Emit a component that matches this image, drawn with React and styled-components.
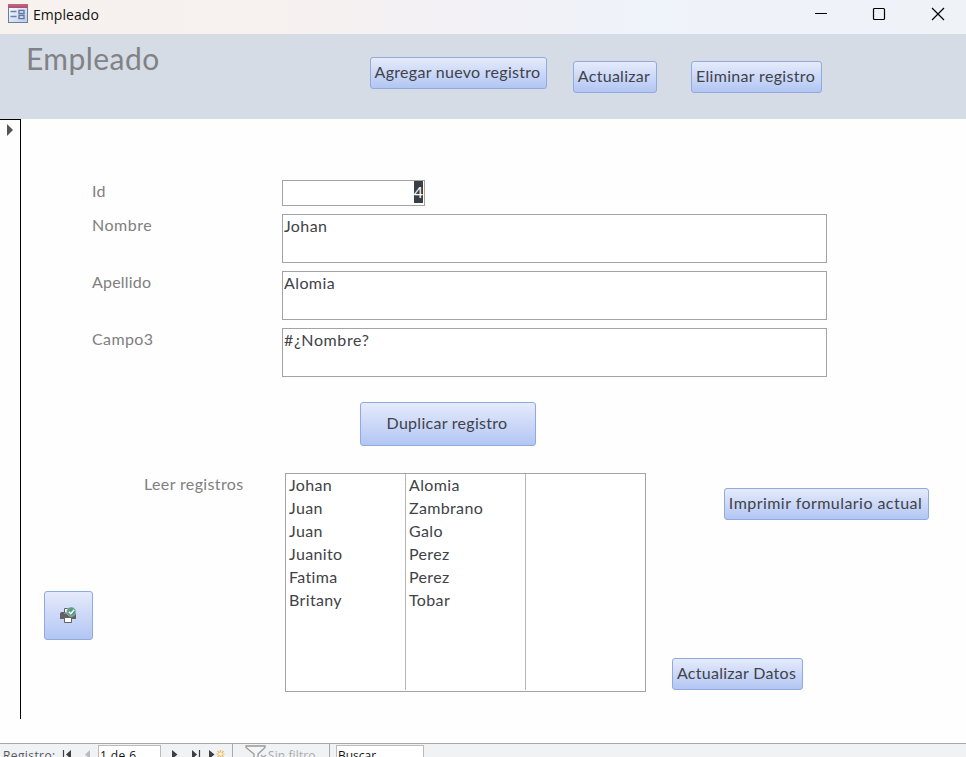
import React from "react";
import styled, { createGlobalStyle } from "styled-components";

const Global = createGlobalStyle`
  * { box-sizing: border-box; }
  body { margin: 0; background: #fff; overflow: hidden; }
`;

const Window = styled.div`
  display: flex;
  flex-direction: column;
  width: 966px;
  height: 757px;
  overflow: hidden;
  background: #fefefe;
  font-family: Lato, "Liberation Sans", sans-serif;
  font-size: 16px;
  font-variant-ligatures: none;
  color: #404347;
  white-space: nowrap;
`;

const TitleBar = styled.header`
  display: flex;
  align-items: flex-start;
  flex: 0 0 34px;
  padding: 4px 21px 0 8px;
  background: linear-gradient(90deg, #f7f2ee 0%, #f7f1ef 28%, #f3f1f6 48%, #eff3fa 66%, #eff3f8 100%);
`;

const WindowTitle = styled.span`
  flex: 1;
  margin: 1px 0 0 5px;
  font: 14px/20px "Open Sans", "Noto Sans", sans-serif;
  letter-spacing: 0.05px;
  color: #111;
`;

const WindowControls = styled.div`
  display: flex;
  gap: 45px;
  padding-top: 3px;
  svg { display: block; }
  svg:first-child { margin-right: -1px; }
`;

const FormHeader = styled.div`
  display: flex;
  align-items: flex-start;
  flex: 0 0 85px;
  background: #d6dce6;
`;

const FormTitle = styled.h1`
  margin: 4px 0 0 26px;
  width: 344px;
  font-size: 30px;
  line-height: 40px;
  font-weight: 400;
  letter-spacing: ${(p) => p.$track}px;
  color: #808285;
`;

const Button = styled.button`
  display: flex;
  align-items: center;
  justify-content: center;
  flex: none;
  width: ${(p) => p.$w}px;
  height: ${(p) => p.$h || 32}px;
  margin: ${(p) => p.$m || "0"};
  padding: ${(p) => (p.$icon ? "0 0 1px" : "0 2px 3px 0")};
  border: 1px solid #8faadc;
  border-radius: 3px;
  background: linear-gradient(#e5ebfb, #ccd8f8 50%, #b2c6f3);
  font: inherit;
  letter-spacing: ${(p) => p.$track || 0.28}px;
  color: #404347;
`;

const Main = styled.div`
  display: flex;
  flex: 0 0 624px;
`;

const RecordSelector = styled.div`
  width: 21px;
  height: 600px;
  padding: 4px 0 0 7px;
  border: solid #000;
  border-width: 1px 1px 0 0;
  svg { display: block; }
`;

const Detail = styled.main`
  display: flex;
  flex-direction: column;
  flex: 1;
  padding-top: 61px;
`;

const Fields = styled.div`
  display: flex;
  flex-direction: column;
  gap: 8px;
  padding-left: 71px;
`;

const FieldRow = styled.label`
  display: flex;
  align-items: flex-start;
`;

const FieldLabel = styled.span`
  width: 190px;
  line-height: 21px;
  letter-spacing: ${(p) => p.$track || 0}px;
  color: #808080;
`;

const Field = styled.div`
  width: ${(p) => p.$w || 545}px;
  height: ${(p) => p.$h || 49}px;
  padding: 0 1px;
  border: 1px solid #a3a3a3;
  background: #fff;
  line-height: 22px;
  letter-spacing: ${(p) => p.$track || 0}px;
  text-align: ${(p) => p.$align || "left"};
`;

const Selected = styled.mark`
  display: inline-block;
  height: 22px;
  background: #3b3e42;
  color: #fff;
`;

const Lower = styled.div`
  display: flex;
  align-items: flex-start;
  margin-top: 27px;
`;

const LeftColumn = styled.div`
  width: 264px;
`;

const ListLabel = styled.div`
  height: 23px;
  margin-left: 123px;
  line-height: 21px;
  letter-spacing: ${(p) => p.$track}px;
  color: #808080;
`;

const ListBox = styled.div`
  display: grid;
  grid-template-columns: 120px 120px 1fr;
  width: 361px;
  height: 219px;
  border: 1px solid #a3a3a3;
  background: #fff;
`;

const Column = styled.div`
  padding-left: 3px;
  margin-bottom: 1px;
  border-right: 1px solid #b5b5b5;
  &:last-child { border-right: 0; }
`;

const Cell = styled.div`
  height: 23px;
  line-height: 21px;
  letter-spacing: ${(p) => p.$track || 0}px;
`;

const RightColumn = styled.div`
  flex: 1;
`;

const NavBar = styled.footer`
  display: flex;
  align-items: flex-start;
  flex: none;
  height: 30px;
  padding-left: 3px;
  border-top: 1px solid #a8a8a8;
  background: #f1f2f4;
  font: 12px/18px "Open Sans", "Noto Sans", sans-serif;
  color: #555;
  svg { flex: none; }
`;

const NavLabel = styled.span`
  width: ${(p) => p.$w}px;
  margin-top: 3px;
  letter-spacing: ${(p) => p.$track || 0}px;
  color: ${(p) => p.$color || "#55585c"};
`;

const NavInput = styled.div`
  width: ${(p) => p.$w}px;
  height: 26px;
  margin-top: 1px;
  padding: 1px 0 0 ${(p) => p.$pad || 2}px;
  border: 1px solid #bababa;
  background: #fff;
  letter-spacing: ${(p) => p.$track || 0}px;
  color: #111;
`;

const Divider = styled.i`
  width: 1px;
  height: 28px;
  margin: ${(p) => p.$m};
  background: #a8a8a8;
`;

const FormIcon = () => (
  <svg width="20" height="19" viewBox="0 0 20 19">
    <defs>
      <linearGradient id="form-top" x2="0" y2="1">
        <stop stopColor="#bd6a87" />
        <stop offset="1" stopColor="#b54b70" />
      </linearGradient>
      <linearGradient id="form-page" x2="1" y2="1">
        <stop stopColor="#fff" />
        <stop offset="1" stopColor="#bccbe4" />
      </linearGradient>
    </defs>
    <rect x=".5" y=".5" width="19" height="18" fill="url(#form-page)" stroke="#667db0" />
    <path d="M0 0h20v4H0z" fill="url(#form-top)" />
    <path d="M2.5 7.5h6M2.5 12.5h6" stroke="#6681b2" strokeWidth="1.4" />
    <path d="M11 6.5h5v3h-5zM11 11.5h5v3h-5z" fill="#eaf0fa" stroke="#6078a5" strokeWidth="1.4" />
  </svg>
);

const Minimize = () => (
  <svg width="14" height="14" viewBox="0 0 14 14"><path d="M1 6.5h12" stroke="#000" /></svg>
);
const Maximize = () => (
  <svg width="14" height="14" viewBox="0 0 14 14"><rect x="1.5" y="1.5" width="11" height="11" rx="1" fill="none" stroke="#000" strokeWidth="1.2" /></svg>
);
const Close = () => (
  <svg width="14" height="14" viewBox="0 0 14 14"><path d="M1 1l12 12M13 1L1 13" stroke="#000" strokeWidth="1.2" /></svg>
);

const PrintIcon = () => (
  <svg width="17" height="17" viewBox="0 0 17 17">
    <path d="M4.5 6V1.5H10V6z" fill="#fff" stroke="#606266" />
    <path d="M0 6.2L1.2 5H4v1.6h7V5h4l1 1.2V12H0z" fill="#606266" />
    <path d="M4.5 10.5h7v5h-7z" fill="#fff" stroke="#606266" />
    <circle cx="11.3" cy="4.7" r="4.7" fill="#5a9c86" stroke="#d4def2" strokeWidth=".5" />
    <path d="M8.8 4.8l2 2 3.4-4" fill="none" stroke="#fff" strokeWidth="1.4" />
  </svg>
);

const PreviousIcons = () => (
  <svg width="39" height="18" viewBox="0 0 39 18">
    <path d="M4.5 6v9" stroke="#3d3f43" strokeWidth="1.2" />
    <path d="M12 6v9L7 10.5z" fill="#3d3f43" />
    <path d="M31 6v9l-5-4.5z" fill="#bbb" />
  </svg>
);

const NextIcons = () => (
  <svg width="71" height="18" viewBox="0 0 71 18">
    <path d="M11 6v9l5.5-4.5zM31 6v9l5-4.5zM48 6v9l5.5-4.5z" fill="#3d3f43" />
    <path d="M38.5 6v9" stroke="#3d3f43" strokeWidth="1.2" />
    <path d="M59.5 6v8M55.5 10h8M56.5 7l6 6M62.5 7l-6 6" stroke="#e7b968" strokeWidth="1.2" />
    <circle cx="59.5" cy="10" r="1.8" fill="#fff3cf" />
  </svg>
);

const Funnel = () => (
  <svg width="23" height="20" viewBox="0 0 23 20">
    <path d="M1 2h19v1.5L13 10v7l-4-3v-4L1 3.5z" fill="#f6f6f6" stroke="#999" strokeWidth="1.3" />
    <path d="M16 11l5 5M21 11l-5 5" stroke="#aaa" strokeWidth="1.4" />
  </svg>
);

const fields = [
  { label: "Nombre", value: "Johan", labelTrack: 0.5, track: 0.4 },
  { label: "Apellido", value: "Alomia", labelTrack: 0.2, track: 0.4 },
  { label: "Campo3", value: "#¿Nombre?", labelTrack: 0.4, track: 0.6 },
];

const columns = [
  { track: 0.35, cells: ["Johan", "Juan", "Juan", "Juanito", "Fatima", "Britany"] },
  { track: 0.35, cells: ["Alomia", "Zambrano", "Galo", "Perez", "Perez", "Tobar"] },
  { track: 0, cells: [] },
];

export default function App() {
  return (
    <>
      <Global />
      <Window>
        <TitleBar>
          <FormIcon />
          <WindowTitle>Empleado</WindowTitle>
          <WindowControls>
            <Minimize />
            <Maximize />
            <Close />
          </WindowControls>
        </TitleBar>
        <FormHeader>
          <FormTitle $track={0.45}>Empleado</FormTitle>
          <Button $w={177} $m="23px 26px 0 0">Agregar nuevo registro</Button>
          <Button $w={84} $m="27px 34px 0 0">Actualizar</Button>
          <Button $w={131} $m="27px 0 0 0" $track={0.33}>Eliminar registro</Button>
        </FormHeader>
        <Main>
          <RecordSelector>
            <svg width="8" height="12" viewBox="0 0 8 12"><path d="M0 0v12l6-6z" fill="#555" /></svg>
          </RecordSelector>
          <Detail>
            <Fields>
              <FieldRow>
                <FieldLabel $track={0.3}>Id</FieldLabel>
                <Field $w={143} $h={26} $align="right"><Selected>4</Selected></Field>
              </FieldRow>
              {fields.map((f) => (
                <FieldRow key={f.label}>
                  <FieldLabel $track={f.labelTrack}>{f.label}</FieldLabel>
                  <Field $track={f.track}>{f.value}</Field>
                </FieldRow>
              ))}
            </Fields>
            <Button $w={176} $h={44} $m="25px 0 0 339px">Duplicar registro</Button>
            <Lower>
              <LeftColumn>
                <ListLabel $track={0.37}>Leer registros</ListLabel>
                <Button $icon $w={49} $h={49} $m="95px 0 0 23px" aria-label="Imprimir"><PrintIcon /></Button>
              </LeftColumn>
              <ListBox>
                {columns.map((column, c) => (
                  <Column key={c}>
                    {column.cells.map((cell, r) => <Cell key={r} $track={column.track}>{cell}</Cell>)}
                  </Column>
                ))}
              </ListBox>
              <RightColumn>
                <Button $w={205} $m="15px 0 0 78px" $track={0.45}>Imprimir formulario actual</Button>
                <Button $w={131} $m="138px 0 0 26px">Actualizar Datos</Button>
              </RightColumn>
            </Lower>
          </Detail>
        </Main>
        <NavBar>
          <NavLabel $w={56} $track={0.4}>Registro:</NavLabel>
          <PreviousIcons />
          <NavInput $w={63} $track={0.4} $pad={1}>1 de 6</NavInput>
          <NextIcons />
          <Divider $m="0 12px 0 0" />
          <Funnel />
          <NavLabel $w={61} $track={0.1} $color="#a9abae">Sin filtro</NavLabel>
          <Divider $m="0 6px 0 0" />
          <NavInput $w={88} $pad={1}>Buscar</NavInput>
        </NavBar>
      </Window>
    </>
  );
}
